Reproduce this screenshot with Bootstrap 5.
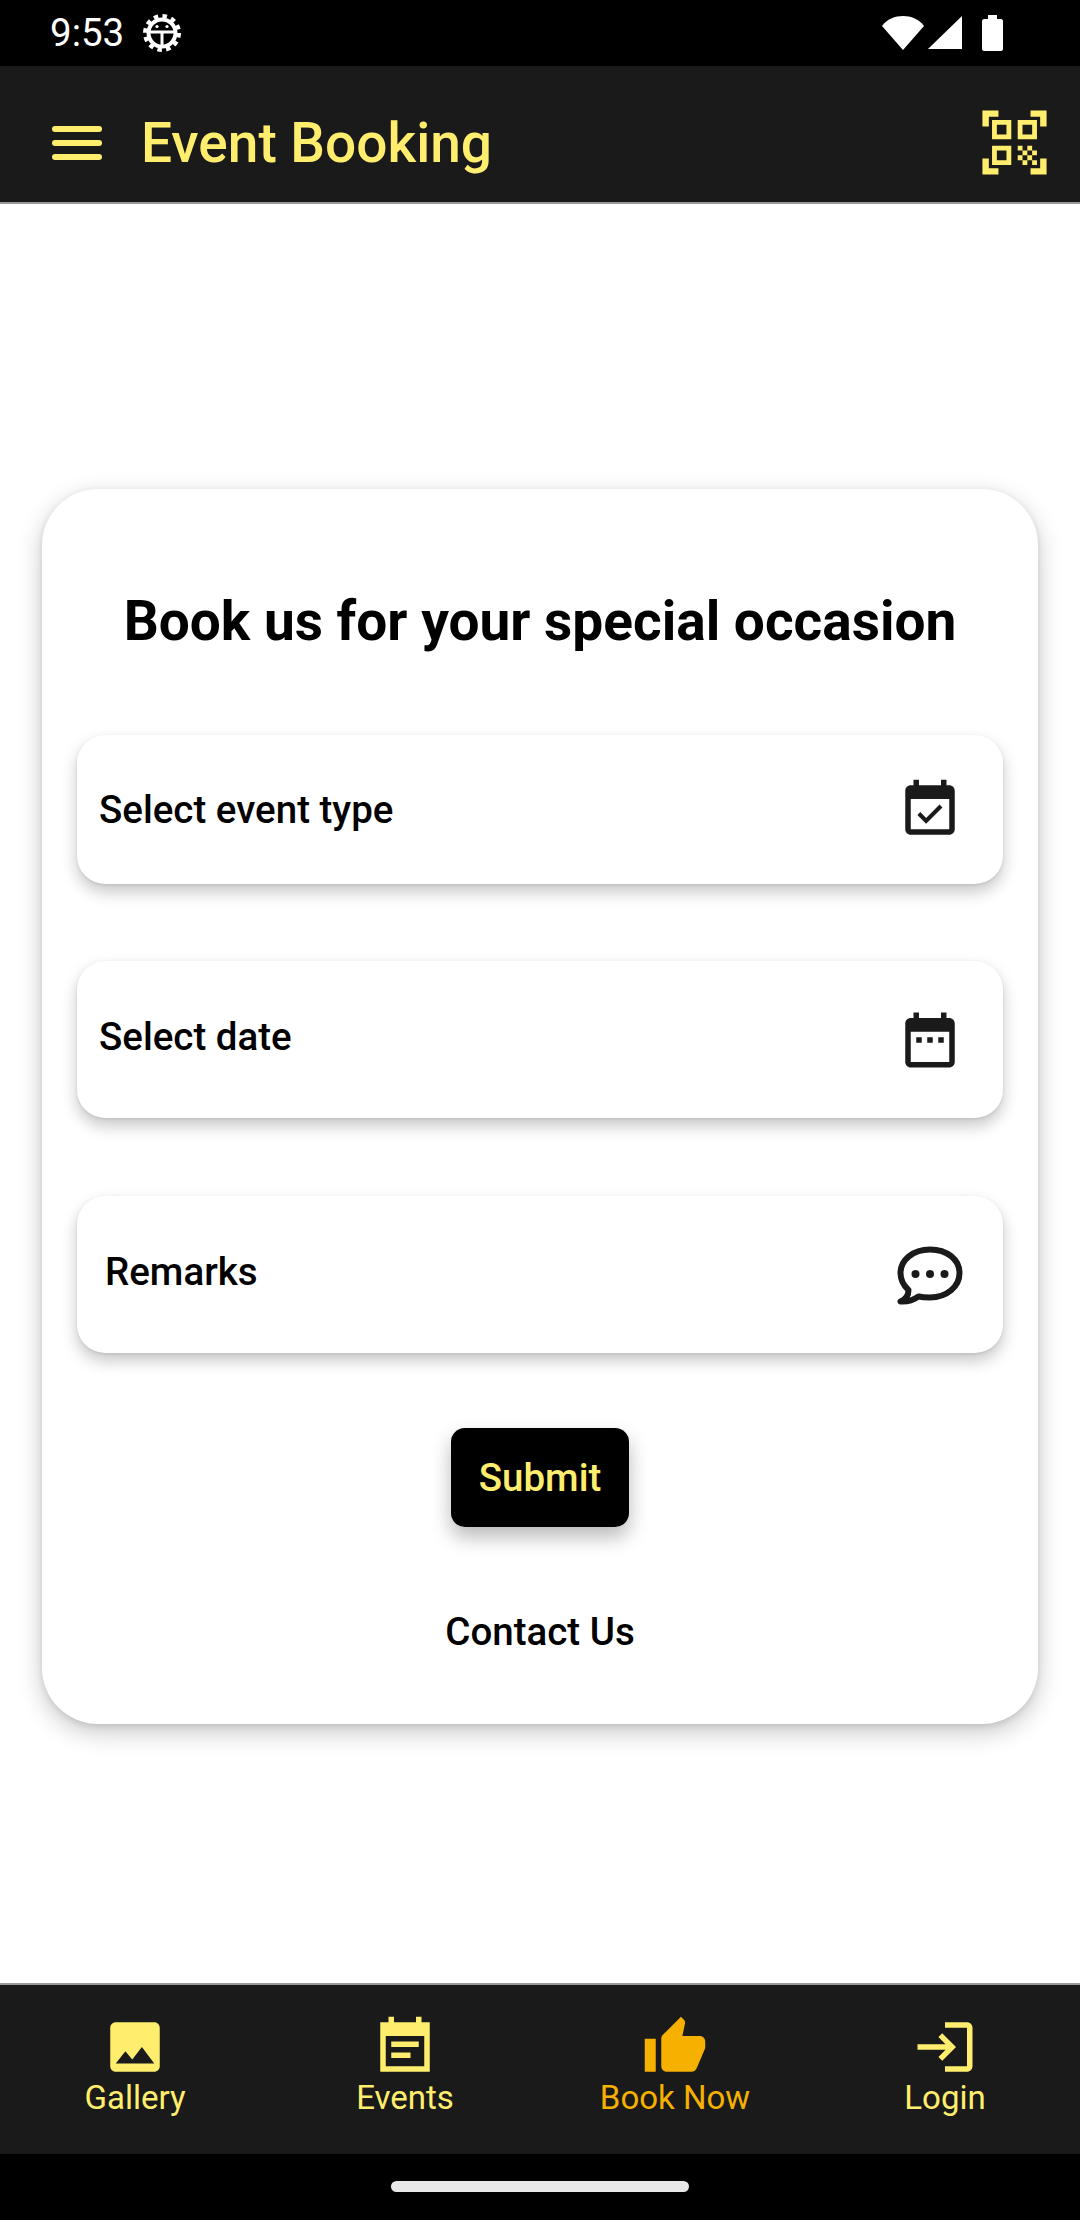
<!DOCTYPE html>
<html lang="en">
<head>
    <meta charset="UTF-8">
    <meta name="viewport" content="width=device-width, initial-scale=1.0">
    <title>Event Booking</title>
    <link href="https://cdn.jsdelivr.net/npm/bootstrap@5.3.0/dist/css/bootstrap.min.css" rel="stylesheet">
    <style>
        html, body {
            height: 2220px;
            overflow: hidden;
        }
        body {
            background-color: #fff;
            color: #000;
            font-family: Roboto, "Liberation Sans", sans-serif;
        }
        .screen {
            height: 2220px;
        }
        .status-bar {
            height: 66px;
            background-color: #000;
            color: #fff;
            padding: 0 77px 0 50px;
        }
        .status-time {
            font-size: 38.5px;
            line-height: 1;
            margin-right: 19px;
        }
        .signal-icon {
            margin-left: 4px;
        }
        .battery-icon {
            margin-left: 20px;
        }
        .app-bar {
            height: 138px;
            background-color: #1a1a1a;
            border-bottom: 2px solid #999;
            padding: 16px 27px 0 52px;
            color: #ffee6d;
        }
        .menu-icon {
            margin-top: 2px;
        }
        .app-title {
            font-size: 55px;
            font-weight: 500;
            line-height: 1;
            margin: 3px 0 0 39px;
        }
        .booking-area {
            padding: 285px 42px 0;
        }
        .booking-card {
            height: 1235px;
            border-radius: 56px;
            background-color: #fff;
            box-shadow: 0 8px 24px rgba(0, 0, 0, .22), 0 2px 6px rgba(0, 0, 0, .1);
            padding: 105px 35px 0;
        }
        .booking-title {
            font-size: 55px;
            font-weight: 700;
            line-height: 1;
            margin: 0 0 86px;
            color: #000;
        }
        .field-box {
            border-radius: 28px;
            background-color: #fff;
            box-shadow: 0 8px 16px rgba(0, 0, 0, .22), 0 1px 3px rgba(0, 0, 0, .1);
            padding: 0 40px 0 22px;
            font-size: 38.5px;
            font-weight: 500;
        }
        .field-event { height: 149px; margin-bottom: 77px; }
        .field-date { height: 157px; margin-bottom: 78px; }
        .field-remarks { height: 157px; padding-left: 28px; margin-bottom: 75px; }
        .field-box span { margin-top: -5px; }
        .field-event span { margin-top: 1px; }
        .chat-icon { margin-right: -3px; }
        .submit-btn {
            width: 178px;
            height: 99px;
            padding: 0;
            border: 0;
            border-radius: 14px;
            background-color: #000;
            color: #ffee6d;
            font-size: 38.5px;
            font-weight: 500;
            box-shadow: 0 10px 20px rgba(0, 0, 0, .28);
        }
        .contact-link {
            margin-top: 83px;
            font-size: 38.5px;
            font-weight: 500;
            line-height: 44px;
        }
        .bottom-nav {
            height: 171px;
            background-color: #1a1a1a;
            border-top: 2px solid #999;
            color: #ffee6d;
        }
        .tab-item {
            flex: 1 1 0;
            font-size: 33px;
            line-height: 38px;
            padding-top: 29px;
        }
        .tab-item.active-tab {
            color: #f5b000;
        }
        .tab-item svg {
            margin-bottom: -1px;
        }
        .gesture-bar {
            height: 66px;
            background-color: #000;
            padding-top: 27px;
        }
        .gesture-pill {
            width: 298px;
            height: 11px;
            border-radius: 6px;
            background-color: #e8e8e8;
        }
        svg {
            display: block;
            flex-shrink: 0;
        }
    </style>
</head>
<body>
    <div class="screen d-flex flex-column">
        <!-- Status Bar -->
        <div class="status-bar d-flex align-items-center">
            <span class="status-time">9:53</span>
            <svg width="38" height="38" viewBox="0 0 38 38" fill="#fff">
                <g fill="none" stroke="#fff">
                    <circle cx="19" cy="19" r="13.5" stroke-width="4"/>
                    <circle cx="19" cy="19" r="17" stroke-width="4" stroke-dasharray="4.5 4.4"/>
                    <path d="M6 18h26M19 18v14" stroke-width="3"/>
                </g>
                <circle cx="14" cy="12.5" r="1.6"/>
                <circle cx="24" cy="12.5" r="1.6"/>
            </svg>
            <div class="ms-auto d-flex align-items-center">
                <svg width="42" height="36" viewBox="0 0 42 36" fill="#fff">
                    <path d="M0 11C5 4 13 1 21 1s16 3 21 10L21 35z"/>
                </svg>
                <svg class="signal-icon" width="34" height="34" viewBox="0 0 34 34" fill="#fff">
                    <path d="M34 0v33H0z"/>
                </svg>
                <svg class="battery-icon" width="21" height="36" viewBox="0 0 21 36" fill="#fff">
                    <path d="M6 0h9v4h4c1 0 2 1 2 2v28c0 1-1 2-2 2H2c-1 0-2-1-2-2V6c0-1 1-2 2-2h4z"/>
                </svg>
            </div>
        </div>

        <!-- App Bar -->
        <div class="app-bar d-flex align-items-center">
            <svg class="menu-icon" width="50" height="34" viewBox="0 0 50 34" fill="#ffee6d">
                <rect y="0" width="50" height="6" rx="3"/>
                <rect y="14" width="50" height="6" rx="3"/>
                <rect y="28" width="50" height="6" rx="3"/>
            </svg>
            <span class="app-title">Event Booking</span>
            <svg class="ms-auto" width="77" height="77" viewBox="0 0 24 24" fill="#ffee6d">
                <path d="M9.5 6.5v3h-3v-3h3M11 5H5v6h6V5zm-1.5 9.5v3h-3v-3h3M11 13H5v6h6v-6zm6.5-6.5v3h-3v-3h3M19 5h-6v6h6V5zm-6 8h1.5v1.5H13V13zm1.5 1.5H16V16h-1.5v-1.5zM16 13h1.5v1.5H16V13zm-3 3h1.5v1.5H13V16zm1.5 1.5H16V19h-1.5v-1.5zM16 16h1.5v1.5H16V16zm1.5-1.5H19V16h-1.5v-1.5zm0 3H19V19h-1.5v-1.5zM22 7h-2V4h-3V2h5v5zm0 15v-5h-2v3h-3v2h5zM2 22h5v-2H4v-3H2v5zM2 2v5h2V4h3V2H2z"/>
            </svg>
        </div>

        <!-- Booking Form -->
        <div class="booking-area flex-grow-1">
            <div class="booking-card">
                <h1 class="booking-title text-center">Book us for your special occasion</h1>
                <div class="field-box field-event d-flex align-items-center justify-content-between">
                    <span>Select event type</span>
                    <svg width="66" height="66" viewBox="0 0 24 24" fill="#1a1a1a">
                        <path d="M16.53 11.06L15.47 10l-4.88 4.88-2.12-2.12-1.06 1.06L10.59 17l5.94-5.94zM19 3h-1V1h-2v2H8V1H6v2H5c-1.11 0-1.99.9-1.99 2L3 19c0 1.1.89 2 2 2h14c1.1 0 2-.9 2-2V5c0-1.1-.9-2-2-2zm0 16H5V8h14v11z"/>
                    </svg>
                </div>
                <div class="field-box field-date d-flex align-items-center justify-content-between">
                    <span>Select date</span>
                    <svg width="66" height="66" viewBox="0 0 24 24" fill="#1a1a1a">
                        <path d="M9 11H7v2h2v-2zm4 0h-2v2h2v-2zm4 0h-2v2h2v-2zm2-7h-1V2h-2v2H8V2H6v2H5c-1.11 0-1.99.9-1.99 2L3 20c0 1.1.89 2 2 2h14c1.1 0 2-.9 2-2V6c0-1.1-.9-2-2-2zm0 16H5V9h14v11z"/>
                    </svg>
                </div>
                <div class="field-box field-remarks d-flex align-items-center justify-content-between">
                    <span>Remarks</span>
                    <svg class="chat-icon" width="72" height="72" viewBox="0 0 72 72">
                        <path d="M36 10.500C19 10.500 6.500 21 6.500 34c0 7 3 12.500 8 17 0 4-2 9-8 11.500 7 .5 13-1.500 18-5 3.500.8 7.500 1 11.500 1C53 58.500 65.500 47.500 65.500 34S53 10.500 36 10.500z" fill="none" stroke="#1a1a1a" stroke-width="6" stroke-linejoin="round"/>
                        <circle cx="21.500" cy="35" r="4" fill="#1a1a1a"/>
                        <circle cx="36" cy="35" r="4" fill="#1a1a1a"/>
                        <circle cx="50.500" cy="35" r="4" fill="#1a1a1a"/>
                    </svg>
                </div>
                <div class="text-center">
                    <button type="button" class="btn submit-btn">Submit</button>
                    <div class="contact-link">Contact Us</div>
                </div>
            </div>
        </div>

        <!-- Bottom Navigation -->
        <div class="bottom-nav d-flex">
            <div class="tab-item d-flex flex-column align-items-center">
                <svg width="66" height="66" viewBox="0 0 24 24" fill="#ffee6d">
                    <path d="M21 19V5c0-1.100-.9-2-2-2H5c-1.100 0-2 .9-2 2v14c0 1.100.9 2 2 2h14c1.100 0 2-.9 2-2zM8.500 13.500l2.500 3.010L14.500 12l4.500 6H5l3.500-4.500z"/>
                </svg>
                <span>Gallery</span>
            </div>
            <div class="tab-item d-flex flex-column align-items-center">
                <svg width="66" height="66" viewBox="0 0 24 24" fill="#ffee6d">
                    <path d="M17 10H7v2h10v-2zM21 3h-3V1h-2v2H8V1H6v2H3v18h18V3zm-2 16H5V8h14v11zm-5-5H7v2h7v-2z"/>
                </svg>
                <span>Events</span>
            </div>
            <div class="tab-item active-tab d-flex flex-column align-items-center">
                <svg width="66" height="66" viewBox="0 0 24 24" fill="#f5b000">
                    <path d="M1 21h4V9H1v12zm22-11c0-1.100-.9-2-2-2h-6.310l.95-4.570.03-.32c0-.41-.17-.79-.44-1.060L14.170 1 7.590 7.590C7.220 7.950 7 8.450 7 9v10c0 1.100.9 2 2 2h9c.83 0 1.540-.5 1.840-1.220l3.020-7.050c.09-.23.14-.47.14-.73v-2z"/>
                </svg>
                <span>Book Now</span>
            </div>
            <div class="tab-item d-flex flex-column align-items-center">
                <svg width="66" height="66" viewBox="0 0 24 24" fill="#ffee6d">
                    <path d="M11 7L9.600 8.400l2.600 2.600H2v2h10.200l-2.600 2.600L11 17l5-5-5-5zm9 12h-8v2h8c1.100 0 2-.9 2-2V5c0-1.100-.9-2-2-2h-8v2h8v14z"/>
                </svg>
                <span>Login</span>
            </div>
        </div>
        <div class="gesture-bar">
            <div class="gesture-pill mx-auto"></div>
        </div>
    </div>
    <script src="https://cdn.jsdelivr.net/npm/bootstrap@5.3.0/dist/js/bootstrap.bundle.min.js"></script>
</body>
</html>
